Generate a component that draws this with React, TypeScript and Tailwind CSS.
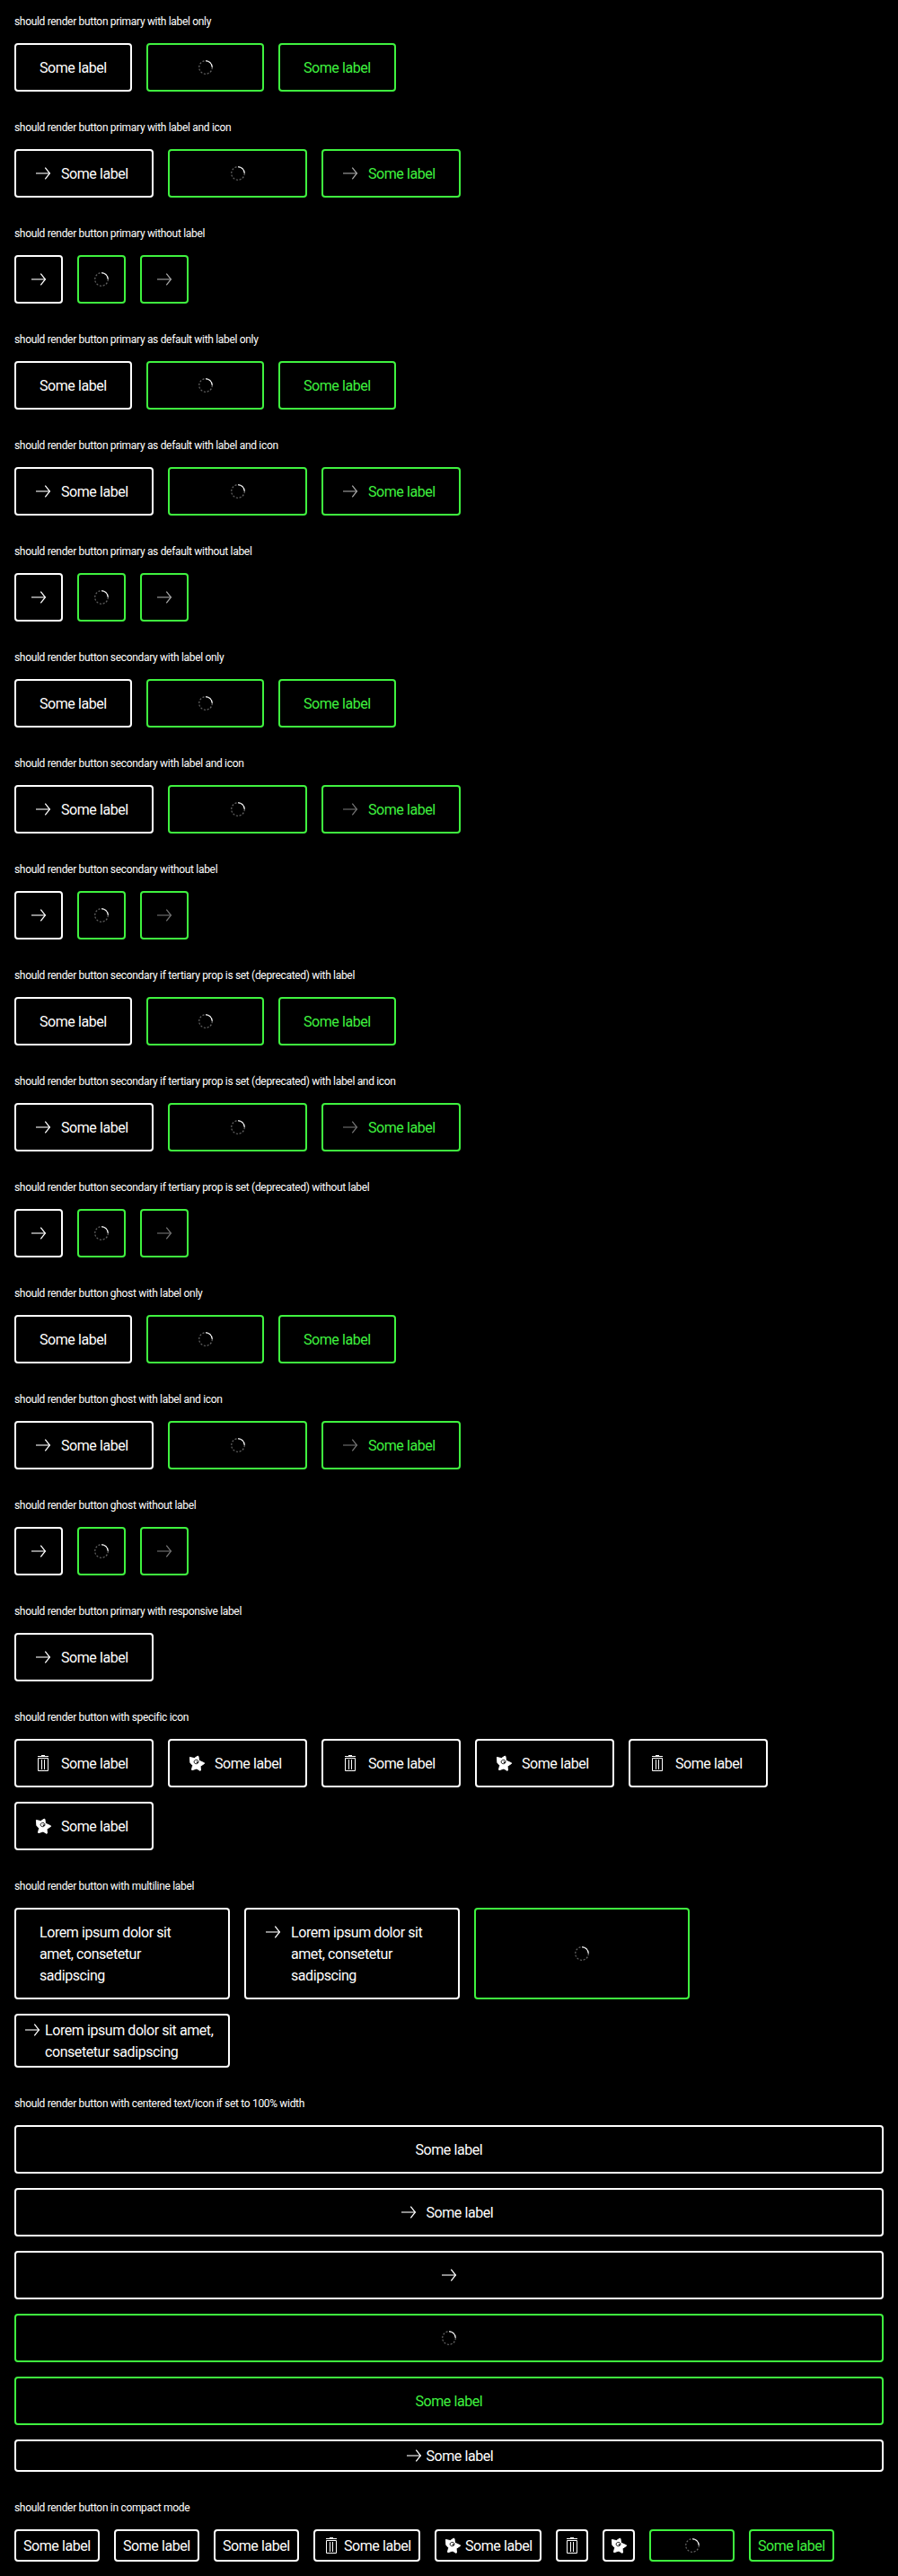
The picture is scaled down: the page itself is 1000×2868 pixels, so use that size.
import React from "react";

type IconName = "arrow" | "trash" | "star";
type State = "normal" | "loading" | "disabled";

const LINE = { fill: "none", stroke: "#fff", strokeWidth: 1 };

function Icon({ name, dim = "" }: { name: IconName; dim?: string }) {
  return (
    <svg viewBox="0 0 24 24" className={`size-6 shrink-0 ${dim}`}>
      {name === "arrow" && (
        <g {...LINE}>
          <path d="M4 12h15.5" strokeWidth={1.1} />
          <path d="M14.3 5.6 19.4 12l-5.1 6.4" strokeWidth={1.25} />
        </g>
      )}
      {name === "trash" && (
        <g {...LINE}>
          <path d="M10 3.5h4M6 4.5h12M10.5 8v11M13.5 8v11" />
          <path d="M6.5 6.5h11v14h-11z" />
        </g>
      )}
      {name === "star" && (
        <>
          <path
            d="M4.4 5.4 9.4 6.6 13 4.2l1 .2.5 4.6 6 2.8.1.6-4.5 3 .4 4.6-.6.4-3.9-2.3-5 1.6-.6-.4 1.2-4.8-2.8-3.1z"
            fill="#fff"
            stroke="#fff"
            strokeWidth=".9"
            strokeLinejoin="round"
          />
          <path d="M9.3 9.6c1-1.6 4-1.6 4.6.2.5 2-1.2 3.2-2.6 2.9-1.8-.2-2.6-1.5-2-3.1z" fill="none" stroke="#000" strokeWidth=".9" />
          <path d="M11.3 10.6h2.2v1.5h-1.2z" fill="#000" />
        </>
      )}
    </svg>
  );
}

function Spinner() {
  return (
    <svg viewBox="0 0 24 24" className="size-6 shrink-0" fill="none">
      <circle cx="12" cy="12" r="7.3" stroke="#666" strokeWidth="1.2" strokeDasharray="2.1 1.72" />
      <path d="M12 4.7A7.3 7.3 0 0 1 19.3 12" stroke="#fff" strokeWidth="1.1" />
    </svg>
  );
}

type ButtonProps = {
  label?: string[];
  icon?: IconName;
  state?: State;
  compact?: boolean;
  size: string;
  dim?: string;
};

function Button({ label, icon, state = "normal", compact = false, size, dim = "opacity-70" }: ButtonProps) {
  const tone = state === "normal" ? "border-white text-white" : "border-[#3ff23f] text-[#3ff23f]";
  const iconOnly = !label;
  const pad =
    iconOnly || state === "loading"
      ? ""
      : compact
        ? icon
          ? "pl-[6px] pr-2"
          : "px-2"
        : icon
          ? "pl-[18px] pr-[26px]"
          : "px-[26px]";
  const vertical = compact ? "py-1" : "py-[13px]";
  const multi = !!label && label.length > 1;
  return (
    <button
      className={`flex shrink-0 rounded-[4px] border-2 ${tone} ${pad} ${vertical} ${size} ${
        multi ? "items-start justify-start" : "items-center justify-center"
      } ${compact ? "gap-0.5" : "gap-2"}`}
    >
      {state === "loading" ? (
        <Spinner />
      ) : (
        <>
          {icon && <Icon name={icon} dim={state === "disabled" ? dim : ""} />}
          {label && (
            <span
              className={`-mb-px flex flex-col pt-px text-left text-[16px] leading-6 tracking-[-0.43px] whitespace-nowrap ${
                multi ? "w-max" : "w-[75px]"
              }`}
            >
              {label.map((line) => (
                <span key={line}>{line}</span>
              ))}
            </span>
          )}
        </>
      )}
    </button>
  );
}

function Section({ title, children }: { title: string; children: React.ReactNode }) {
  return (
    <section>
      <h2 className="mb-4 text-[12px] leading-4 font-normal tracking-[-0.32px] whitespace-nowrap">{title}</h2>
      <div className="flex flex-wrap items-start gap-4">{children}</div>
    </section>
  );
}

const SOME = ["Some label"];
const STATES: State[] = ["normal", "loading", "disabled"];

type Kind = "label" | "both" | "icon";
const GROUPS: { title: string; kind: Kind; dim?: string }[] = [
  { title: "should render button primary with label only", kind: "label" },
  { title: "should render button primary with label and icon", kind: "both", dim: "opacity-65" },
  { title: "should render button primary without label", kind: "icon", dim: "opacity-65" },
  { title: "should render button primary as default with label only", kind: "label" },
  { title: "should render button primary as default with label and icon", kind: "both", dim: "opacity-65" },
  { title: "should render button primary as default without label", kind: "icon", dim: "opacity-65" },
  { title: "should render button secondary with label only", kind: "label" },
  { title: "should render button secondary with label and icon", kind: "both", dim: "opacity-45" },
  { title: "should render button secondary without label", kind: "icon", dim: "opacity-45" },
  { title: "should render button secondary if tertiary prop is set (deprecated) with label", kind: "label" },
  { title: "should render button secondary if tertiary prop is set (deprecated) with label and icon", kind: "both", dim: "opacity-45" },
  { title: "should render button secondary if tertiary prop is set (deprecated) without label", kind: "icon", dim: "opacity-45" },
  { title: "should render button ghost with label only", kind: "label" },
  { title: "should render button ghost with label and icon", kind: "both", dim: "opacity-45" },
  { title: "should render button ghost without label", kind: "icon", dim: "opacity-45" },
];
const SIZES: Record<Kind, string> = { label: "w-[131px]", both: "w-[155px]", icon: "w-[54px]" };
const SPECIFIC: IconName[] = ["trash", "star", "trash", "star", "trash", "star"];
const LOREM = ["Lorem ipsum dolor sit", "amet, consetetur", "sadipscing"];

export default function App() {
  return (
    <main className="flex h-[2868px] w-[1000px] flex-col gap-8 bg-black p-4 font-['Roboto',sans-serif] text-white">
      {GROUPS.map((g) => (
        <Section key={g.title} title={g.title}>
          {STATES.map((s) => (
            <Button
              key={s}
              state={s}
              size={SIZES[g.kind]}
              label={g.kind === "icon" ? undefined : SOME}
              icon={g.kind === "label" ? undefined : "arrow"}
              dim={g.dim}
            />
          ))}
        </Section>
      ))}
      <Section title="should render button primary with responsive label">
        <Button icon="arrow" label={SOME} size="w-[155px]" />
      </Section>
      <Section title="should render button with specific icon">
        {SPECIFIC.map((name, i) => (
          <Button key={i} icon={name} label={SOME} size="w-[155px]" />
        ))}
      </Section>
      <Section title="should render button with multiline label">
        <Button label={LOREM} size="w-[240px]" />
        <Button icon="arrow" label={LOREM} size="w-[240px]" />
        <Button state="loading" size="w-[240px] h-[102px]" />
        <Button compact icon="arrow" label={["Lorem ipsum dolor sit amet,", "consetetur sadipscing"]} size="w-[240px]" />
      </Section>
      <Section title="should render button with centered text/icon if set to 100% width">
        <Button label={SOME} size="w-full" />
        <Button icon="arrow" label={SOME} size="w-full" />
        <Button icon="arrow" size="w-full" />
        <Button state="loading" size="w-full" />
        <Button state="disabled" label={SOME} size="w-full" />
        <Button compact icon="arrow" label={SOME} size="w-full" />
      </Section>
      <Section title="should render button in compact mode">
        <Button compact label={SOME} size="w-[95px]" />
        <Button compact label={SOME} size="w-[95px]" />
        <Button compact label={SOME} size="w-[95px]" />
        <Button compact icon="trash" label={SOME} size="w-[119px]" />
        <Button compact icon="star" label={SOME} size="w-[119px]" />
        <Button compact icon="trash" size="w-[36px]" />
        <Button compact icon="star" size="w-[36px]" />
        <Button compact state="loading" size="w-[95px]" />
        <Button compact state="disabled" label={SOME} size="w-[95px]" />
      </Section>
    </main>
  );
}
